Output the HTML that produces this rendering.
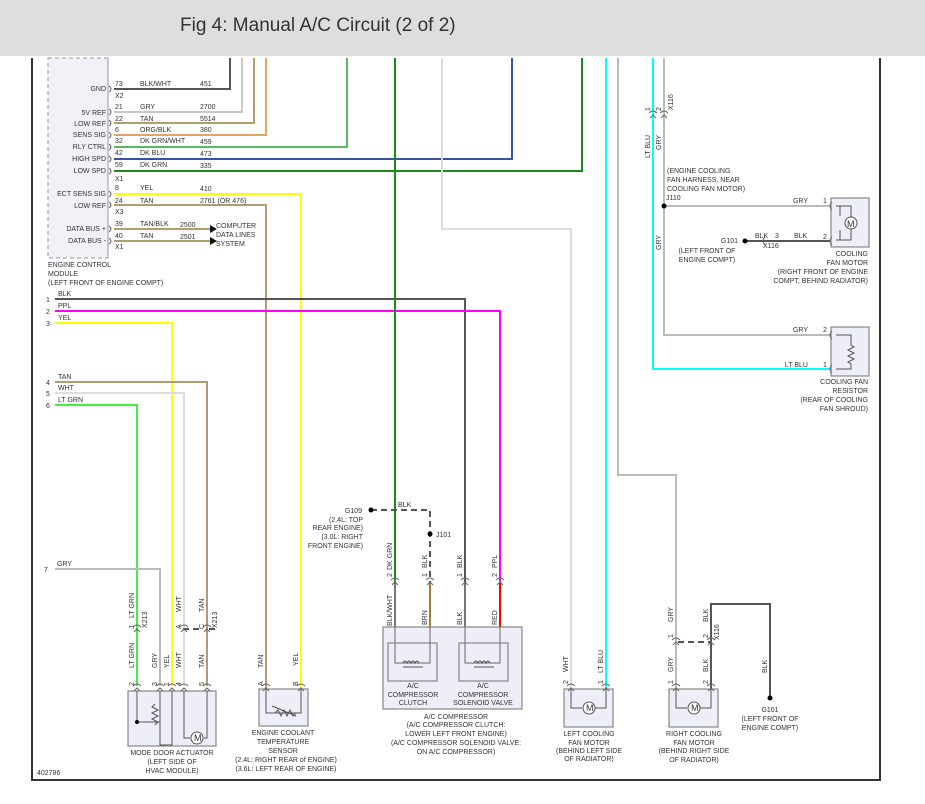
<!DOCTYPE html>
<html><head><meta charset="utf-8"><style>
html,body{margin:0;padding:0;background:#fff;width:925px;height:804px;overflow:hidden}
.hdr{position:absolute;left:0;top:0;width:925px;height:56px;background:#dedede}
.hdr span{position:absolute;left:180px;top:15px;font:19px "Liberation Sans",sans-serif;color:#333}
svg{position:absolute;left:0;top:0}
text{font-family:"Liberation Sans",sans-serif;font-size:7px;fill:#333}
.w{fill:none;stroke-width:2}
.c{fill:none;stroke:#666;stroke-width:1}
.bx{fill:#eeeef8;stroke:#888;stroke-width:1.2}
</style></head><body>
<div class="hdr"><span>Fig 4: Manual A/C Circuit (2 of 2)</span></div>
<svg width="925" height="804" viewBox="0 0 925 804">
<!-- frame -->
<path d="M32 58V780H880V58" fill="none" stroke="#333" stroke-width="2"/>
<!-- ECM box -->
<rect x="48" y="58" width="60" height="200" fill="#f1f1f8" stroke="#999" stroke-dasharray="4,3"/>
<path d="M108 58V258" stroke="#999" stroke-dasharray="4,3"/>
<!-- ECM wires -->
<path class="w" stroke="#555" stroke-width="1.5" d="M114 89H230V58"/>
<path class="w" stroke="#c8c8c8" d="M114 112H242V58"/>
<path class="w" stroke="#b39b72" d="M114 123H254V58"/>
<path class="w" stroke="#e6a464" d="M114 135H266V58"/>
<path class="w" stroke="#5cb85c" d="M114 147H347V58"/>
<path class="w" stroke="#3a50a0" stroke-width="2.5" d="M114 159H512V58"/>
<path class="w" stroke="#1a8a1a" d="M114 171H582V58"/>
<path class="w" stroke="#ffff00" d="M114 194H301V689"/>
<path class="w" stroke="#b39b72" d="M114 205H266V689"/>
<path class="w" stroke="#b39b72" d="M114 229H210M114 241H210"/>
<path d="M210 225l7 4-7 4zM210 237l7 4-7 4z" fill="#111"/>
<!-- left side numbered wires -->
<path class="w" stroke="#555" stroke-width="1.5" d="M55 299H465V582"/>
<path class="w" stroke="#ff00ff" d="M55 311H500V582"/>
<path class="w" stroke="#ffff00" d="M55 323H172V686"/>
<path class="w" stroke="#b39b72" d="M55 382H207V686"/>
<path class="w" stroke="#dddddd" d="M55 393H184V686"/>
<path class="w" stroke="#44ee44" d="M55 405H137V686"/>
<path class="w" stroke="#bbb" d="M55 569H160V686"/>
<!-- center wires -->
<path class="w" stroke="#1a8a1a" d="M395 58V582"/>
<path class="w" stroke="#dcdcdc" stroke-width="1.5" d="M442 58V229H571V688"/>
<path class="w" stroke="#00ffff" d="M606 58V688"/>
<path class="w" stroke="#bbb" stroke-width="1.5" d="M618 58V475H676V688"/>
<path class="w" stroke="#00ffff" d="M653 58V369H830"/>
<path class="w" stroke="#bbb" stroke-width="1.5" d="M664 58V335H830M664 206H830"/>
<path class="w" stroke="#555" d="M745 241H830"/>
<path class="w" stroke="#555" d="M711 688V604H770V698"/>
<path fill="none" stroke="#555" stroke-width="2" stroke-dasharray="6,4" d="M371 510H430V582M678 642H711M183 629H200M215 629H207"/>
<circle cx="371" cy="510" r="2.5" fill="#000"/><circle cx="430" cy="534" r="2.5" fill="#000"/>
<circle cx="664" cy="206" r="2.5" fill="#000"/><circle cx="745" cy="241" r="2.5" fill="#000"/>
<circle cx="770" cy="698" r="2.5" fill="#000"/>
<!-- compressor lower wires -->
<path class="w" stroke="#777" stroke-width="1.5" d="M395 582V660"/>
<path class="w" stroke="#a08030" d="M430 582V660"/>
<path class="w" stroke="#777" stroke-width="1.5" d="M465 582V660"/>
<path class="w" stroke="#ff0000" d="M500 582V627"/>
<!-- boxes -->
<rect class="bx" x="383" y="627" width="139" height="82"/>
<rect class="bx" x="388" y="643" width="49" height="38"/>
<rect class="bx" x="459" y="643" width="49" height="38"/>
<path d="M395 627V663H430V627M465 627V663H500V627" fill="none" stroke="#666"/>
<path d="M403 663q2-4 4 0q2-4 4 0q2-4 4 0q2-4 4 0M403 667H423M474 663q2-4 4 0q2-4 4 0q2-4 4 0q2-4 4 0M474 667H494" fill="none" stroke="#555"/>
<rect class="bx" x="564" y="689" width="49" height="38"/>
<rect class="bx" x="669" y="689" width="49" height="38"/>
<rect class="bx" x="128" y="691" width="88" height="55"/>
<rect class="bx" x="259" y="689" width="49" height="37"/>
<rect class="bx" x="831" y="198" width="38" height="49"/>
<rect class="bx" x="831" y="327" width="38" height="49"/>
<!-- motors -->
<g fill="none" stroke="#555">
<path d="M571 689V708H582M595 708H606V689"/><circle cx="589" cy="708" r="6" fill="#fff"/>
<path d="M676 689V708H687M700 708H711V689"/><circle cx="694" cy="708" r="6" fill="#fff"/>
<path d="M840 206V216M840 230V240"/><circle cx="851" cy="223" r="6" fill="#fff"/>
<path d="M836 206H851V217M836 240H851V229"/>
<path d="M836 335H851V345l3 2-6 3 6 3-6 3 6 3-6 3 3 2V369H836"/>
<path d="M266 689V713H301V689"/><path d="M272 706l24 10" />
<path d="M275 713l3-3 3 6 3-6 3 6 3-6 3 6 3-3"/>
<path d="M137 691V722H160M160 691V745H172V691"/><path d="M155 725l3-3-6-3 6-3-6-3 6-3-6-3 3-3"/>
<path d="M184 691V738H190M204 738H207V691"/><circle cx="197" cy="738" r="6" fill="#fff"/>
</g>
<circle cx="137" cy="722" r="2" fill="#000"/>
<g font-size="9"><text x="586" y="711" style="font-size:9px">M</text><text x="691" y="711" style="font-size:9px">M</text><text x="847" y="227" style="font-size:9px">M</text><text x="194" y="741" style="font-size:9px">M</text></g>
<!-- connectors (vertical) -->
<g class="c" fill="none" stroke="#666">
<path d="M391 580q4-4 8 0M392 585l3-3 3 3M426 580q4-4 8 0M427 585l3-3 3 3M461 580q4-4 8 0M462 585l3-3 3 3M496 580q4-4 8 0M497 585l3-3 3 3"/>
<path d="M133 627q4-4 8 0M134 632l3-3 3 3M180 627q4-4 8 0M181 632l3-3 3 3M203 627q4-4 8 0M204 632l3-3 3 3"/>
<path d="M133 686q4-4 8 0M134 691l3-3 3 3M156 686q4-4 8 0M157 691l3-3 3 3M168 686q4-4 8 0M169 691l3-3 3 3M180 686q4-4 8 0M181 691l3-3 3 3M203 686q4-4 8 0M204 691l3-3 3 3"/>
<path d="M262 686q4-4 8 0M263 691l3-3 3 3M297 686q4-4 8 0M298 691l3-3 3 3"/>
<path d="M567 686q4-4 8 0M568 691l3-3 3 3M602 686q4-4 8 0M603 691l3-3 3 3M672 686q4-4 8 0M673 691l3-3 3 3M707 686q4-4 8 0M708 691l3-3 3 3"/>
<path d="M672 640q4-4 8 0M673 645l3-3 3 3M707 640q4-4 8 0M708 645l3-3 3 3"/>
<path d="M649 113q4-4 8 0M650 118l3-3 3 3M660 113q4-4 8 0M661 118l3-3 3 3"/>
<path d="M832 202q-4 4 0 8M832 237q-4 4 0 8M832 331q-4 4 0 8M832 365q-4 4 0 8M765 237q-4 4 0 8"/>
</g>
<!-- ECM connector ticks -->
<g fill="none" stroke="#666"><path d="M109 86q4 3 0 6M109 109q4 3 0 6M109 120q4 3 0 6M109 132q4 3 0 6M109 144q4 3 0 6M109 156q4 3 0 6M109 168q4 3 0 6M109 191q4 3 0 6M109 202q4 3 0 6M109 226q4 3 0 6M109 238q4 3 0 6"/></g>
<!-- ECM labels -->
<g text-anchor="end">
<text x="106" y="91">GND</text><text x="106" y="115">5V REF</text><text x="106" y="126">LOW REF</text><text x="106" y="137">SENS SIG</text><text x="106" y="149">RLY CTRL</text><text x="106" y="161">HIGH SPD</text><text x="106" y="173">LOW SPD</text><text x="106" y="196">ECT SENS SIG</text><text x="106" y="208">LOW REF</text><text x="106" y="231">DATA BUS +</text><text x="106" y="243">DATA BUS -</text>
</g>
<text x="115" y="86">73</text><text x="140" y="86">BLK/WHT</text><text x="200" y="86">451</text><text x="115" y="98">X2</text>
<text x="115" y="109">21</text><text x="140" y="109">GRY</text><text x="200" y="109">2700</text>
<text x="115" y="121">22</text><text x="140" y="121">TAN</text><text x="200" y="121">5514</text>
<text x="115" y="132">6</text><text x="140" y="132">ORG/BLK</text><text x="200" y="132">380</text>
<text x="115" y="143">32</text><text x="140" y="143">DK GRN/WHT</text><text x="200" y="144">459</text>
<text x="115" y="155">42</text><text x="140" y="155">DK BLU</text><text x="200" y="156">473</text>
<text x="115" y="167">59</text><text x="140" y="167">DK GRN</text><text x="200" y="168">335</text><text x="115" y="181">X1</text>
<text x="115" y="190">8</text><text x="140" y="190">YEL</text><text x="200" y="191">410</text>
<text x="115" y="203">24</text><text x="140" y="203">TAN</text><text x="200" y="203">2761  (OR 476)</text><text x="115" y="214">X3</text>
<text x="115" y="226">39</text><text x="140" y="226">TAN/BLK</text><text x="180" y="227">2500</text>
<text x="115" y="238">40</text><text x="140" y="238">TAN</text><text x="180" y="239">2501</text><text x="115" y="249">X1</text>
<text x="216" y="228">COMPUTER</text><text x="216" y="237">DATA LINES</text><text x="216" y="246">SYSTEM</text>
<text x="48" y="267">ENGINE CONTROL</text><text x="48" y="276">MODULE</text><text x="48" y="285">(LEFT FRONT OF ENGINE COMPT)</text>
<text x="46" y="302">1</text><text x="58" y="296">BLK</text>
<text x="46" y="314">2</text><text x="58" y="308">PPL</text>
<text x="46" y="326">3</text><text x="58" y="320">YEL</text>
<text x="46" y="385">4</text><text x="58" y="379">TAN</text>
<text x="46" y="396">5</text><text x="58" y="390">WHT</text>
<text x="46" y="408">6</text><text x="58" y="402">LT GRN</text>
<text x="44" y="572">7</text><text x="57" y="566">GRY</text>
<!-- G109 -->
<text x="362" y="513" text-anchor="end">G109</text>
<text x="398" y="507">BLK</text><text x="436" y="537">J101</text>
<g text-anchor="end"><text x="363" y="522">(2.4L: TOP</text><text x="363" y="530">REAR ENGINE)</text><text x="363" y="539">(3.0L: RIGHT</text><text x="363" y="548">FRONT ENGINE)</text></g>
<!-- rotated labels -->
<g>
<text transform="translate(392,570) rotate(-90)">DK GRN</text>
<text transform="translate(427,568) rotate(-90)">BLK</text>
<text transform="translate(462,568) rotate(-90)">BLK</text>
<text transform="translate(497,568) rotate(-90)">PPL</text>
<text transform="translate(392,577) rotate(-90)">2</text><text transform="translate(427,577) rotate(-90)">1</text><text transform="translate(462,577) rotate(-90)">1</text><text transform="translate(497,577) rotate(-90)">2</text>
<text transform="translate(392,626) rotate(-90)">BLK/WHT</text>
<text transform="translate(427,625) rotate(-90)">BRN</text>
<text transform="translate(462,625) rotate(-90)">BLK</text>
<text transform="translate(497,625) rotate(-90)">RED</text>
<text transform="translate(134,618) rotate(-90)">LT GRN</text>
<text transform="translate(134,668) rotate(-90)">LT GRN</text>
<text transform="translate(181,612) rotate(-90)">WHT</text>
<text transform="translate(204,612) rotate(-90)">TAN</text>
<text transform="translate(157,668) rotate(-90)">GRY</text>
<text transform="translate(169,668) rotate(-90)">YEL</text>
<text transform="translate(181,668) rotate(-90)">WHT</text>
<text transform="translate(204,668) rotate(-90)">TAN</text>
<text transform="translate(134,629) rotate(-90)">J</text><text transform="translate(181,629) rotate(-90)">A</text><text transform="translate(204,629) rotate(-90)">C</text>
<text transform="translate(147,628) rotate(-90)">X213</text><text transform="translate(217,628) rotate(-90)">X213</text>
<text transform="translate(134,686) rotate(-90)">2</text><text transform="translate(157,686) rotate(-90)">3</text><text transform="translate(169,686) rotate(-90)">1</text><text transform="translate(181,686) rotate(-90)">4</text><text transform="translate(204,686) rotate(-90)">5</text>
<text transform="translate(263,668) rotate(-90)">TAN</text><text transform="translate(298,666) rotate(-90)">YEL</text>
<text transform="translate(263,686) rotate(-90)">A</text><text transform="translate(298,686) rotate(-90)">B</text>
<text transform="translate(568,672) rotate(-90)">WHT</text><text transform="translate(603,673) rotate(-90)">LT BLU</text>
<text transform="translate(568,684) rotate(-90)">2</text><text transform="translate(603,684) rotate(-90)">1</text>
<text transform="translate(673,622) rotate(-90)">GRY</text><text transform="translate(708,622) rotate(-90)">BLK</text>
<text transform="translate(673,638) rotate(-90)">1</text><text transform="translate(708,638) rotate(-90)">2</text>
<text transform="translate(719,640) rotate(-90)">X116</text>
<text transform="translate(673,672) rotate(-90)">GRY</text><text transform="translate(708,672) rotate(-90)">BLK</text>
<text transform="translate(673,684) rotate(-90)">1</text><text transform="translate(708,684) rotate(-90)">2</text>
<text transform="translate(767,673) rotate(-90)">BLK</text>
<text transform="translate(650,158) rotate(-90)">LT BLU</text><text transform="translate(661,150) rotate(-90)">GRY</text>
<text transform="translate(661,250) rotate(-90)">GRY</text>
<text transform="translate(650,111) rotate(-90)">1</text><text transform="translate(661,111) rotate(-90)">2</text>
<text transform="translate(673,110) rotate(-90)">X116</text>
</g>
<!-- component labels -->
<g text-anchor="middle">
<text x="172" y="755">MODE DOOR ACTUATOR</text><text x="172" y="764">(LEFT SIDE OF</text><text x="172" y="773">HVAC MODULE)</text>
<text x="283" y="735">ENGINE COOLANT</text><text x="283" y="744">TEMPERATURE</text><text x="283" y="753">SENSOR</text><text x="286" y="762">(2.4L: RIGHT REAR of ENGINE)</text><text x="286" y="771">(3.6L: LEFT REAR OF ENGINE)</text>
<text x="413" y="688">A/C</text><text x="413" y="697">COMPRESSOR</text><text x="413" y="705">CLUTCH</text>
<text x="483" y="688">A/C</text><text x="483" y="697">COMPRESSOR</text><text x="483" y="705">SOLENOID VALVE</text>
<text x="456" y="719">A/C COMPRESSOR</text><text x="456" y="727">(A/C COMPRESSOR CLUTCH:</text><text x="456" y="736">LOWER LEFT FRONT ENGINE)</text><text x="456" y="745">(A/C COMPRESSOR SOLENOID VALVE:</text><text x="456" y="754">ON A/C COMPRESSOR)</text>
<text x="589" y="736">LEFT COOLING</text><text x="589" y="745">FAN MOTOR</text><text x="589" y="753">(BEHIND LEFT SIDE</text><text x="589" y="761">OF RADIATOR)</text>
<text x="694" y="736">RIGHT COOLING</text><text x="694" y="745">FAN MOTOR</text><text x="694" y="753">(BEHIND RIGHT SIDE</text><text x="694" y="762">OF RADIATOR)</text>
<text x="770" y="712">G101</text><text x="770" y="721">(LEFT FRONT OF</text><text x="770" y="730">ENGINE COMPT)</text>
<text x="707" y="253">(LEFT FRONT OF</text><text x="707" y="262">ENGINE COMPT)</text>
</g>
<g text-anchor="end">
<text x="868" y="256">COOLING</text><text x="868" y="265">FAN MOTOR</text><text x="868" y="274">(RIGHT FRONT OF ENGINE</text><text x="868" y="283">COMPT, BEHIND RADIATOR)</text>
<text x="868" y="384">COOLING FAN</text><text x="868" y="393">RESISTOR</text><text x="868" y="402">(REAR OF COOLING</text><text x="868" y="411">FAN SHROUD)</text>
<text x="808" y="203">GRY</text><text x="808" y="332">GRY</text><text x="808" y="367">LT BLU</text>
<text x="738" y="243">G101</text>
</g>
<text x="667" y="173">(ENGINE COOLING</text><text x="667" y="182">FAN HARNESS, NEAR</text><text x="667" y="191">COOLING FAN MOTOR)</text><text x="666" y="200">J110</text>
<text x="823" y="203">1</text><text x="823" y="239">2</text><text x="823" y="332">2</text><text x="823" y="367">1</text>
<text x="755" y="238">BLK</text><text x="775" y="238">3</text><text x="794" y="238">BLK</text><text x="763" y="248">X116</text>
<text x="37" y="775">402786</text>
</svg>
</body></html>
